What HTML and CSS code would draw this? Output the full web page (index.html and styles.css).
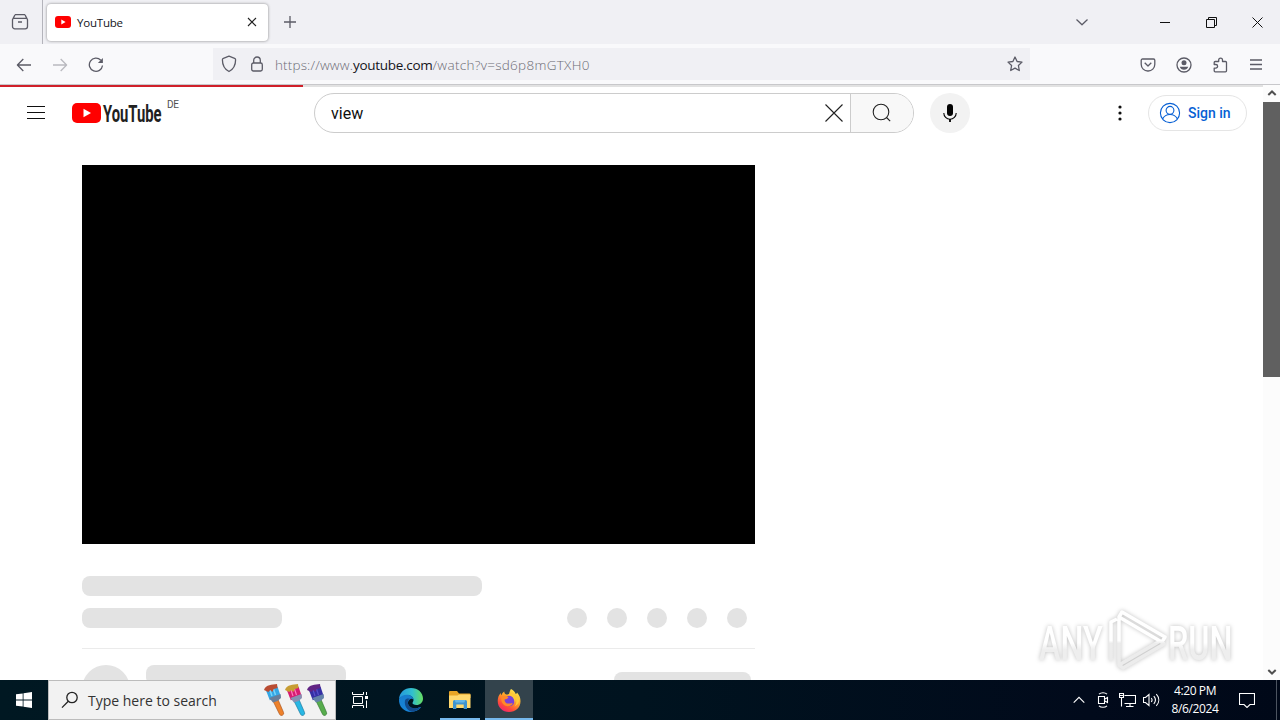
FILE: index.html
```html
<!DOCTYPE html>
<html lang="en">
  <head>
    <meta charset="UTF-8" />
    <meta name="viewport" content="width=device-width, initial-scale=1.0" />
    <title>YouTube</title>
    <link rel="stylesheet" href="styles.css">
  </head>
  <body>
    <!-- tabs -->
    <div class="tabbar">
      <div class="firefox-view">
        <svg width="18" height="18" viewBox="0 0 18 18" class="line-icon"><path d="M4 1.7h10M2.8 5.4h12.4a1.3 1.3 0 0 1 1.3 1.3v6.8a2.3 2.3 0 0 1-2.3 2.3H3.8a2.3 2.3 0 0 1-2.3-2.3V6.7a1.3 1.3 0 0 1 1.3-1.3zM7 9h4M4 1.7 2.2 5.4M14 1.7l1.8 3.7"/></svg>
      </div>
      <div class="tab">
        <svg width="16" height="12" viewBox="0 0 16 12"><rect width="16" height="12" rx="3" fill="#f00"/><path d="M6.3 3.5v5l4.3-2.5z" fill="#fff"/></svg>
        <span class="tab-title">YouTube</span>
        <svg width="10" height="10" viewBox="0 0 10 10" class="dark-icon"><path d="M1 1l8 8M9 1L1 9"/></svg>
      </div>
      <svg class="new-tab line-icon" width="12" height="12" viewBox="0 0 12 12"><path d="M6 0v12M0 6h12"/></svg>
      <svg class="all-tabs line-icon" width="14" height="8" viewBox="0 0 14 8"><path d="M1.5 1.5 7 6.7l5.5-5.2"/></svg>
      <div class="window-buttons">
        <span><svg width="11" height="11" viewBox="0 0 11 11" class="win-icon"><path d="M0 5.500h10"/></svg></span>
        <span><svg width="11" height="11" viewBox="0 0 11 11" class="win-icon"><path d="M.5 2.500h8v8h-8zM2.500 2.500v-2h8v8h-2"/></svg></span>
        <span><svg width="11" height="11" viewBox="0 0 11 11" class="win-icon"><path d="M.5.5l10 10M10.500.5l-10 10"/></svg></span>
      </div>
    </div>

    <!-- navigation toolbar -->
    <div class="toolbar">
      <span class="tool"><svg width="16" height="14" viewBox="0 0 16 14" class="line-icon"><path d="M15 7H1.5M7.3 1 1.4 7l5.900 6"/></svg></span>
      <span class="tool disabled"><svg width="16" height="14" viewBox="0 0 16 14" class="line-icon"><path d="M1 7h13.5M8.7 1l5.900 6-5.900 6"/></svg></span>
      <span class="tool"><svg width="16" height="16" viewBox="0 0 16 16" class="line-icon"><path d="M14.5 8.500a6.600 6.600 0 1 1-1.700-5.200"/><path d="M14.9 1v5h-5z" fill="#5b5b66" stroke="none"/></svg></span>
      <div class="urlbar">
        <svg width="16" height="18" viewBox="0 0 16 18" class="line-icon"><path d="M8 1.200l5.600 2.100a1.500 1.500 0 0 1 1 1.400c0 5-1.700 9.200-6.600 11.800C3.100 13.900 1.400 9.700 1.400 4.700a1.500 1.500 0 0 1 1-1.400z"/></svg>
        <svg width="14" height="16" viewBox="0 0 14 16" class="line-icon lock"><rect x="1.700" y="7" width="10.600" height="8" rx="1.700"/><path d="M3.700 7V4.300a3.300 3.300 0 0 1 6.600 0V7"/></svg>
        <span class="url"><span class="url-scheme">https://www.</span><span class="url-host">youtube.com</span><span class="url-path">/watch?v=sd6p8mGTXH0</span></span>
        <svg width="16" height="16" viewBox="0 0 16 16" class="line-icon"><path d="M8 1l2.100 4.500 4.900.6-3.600 3.400.9 5L8 12.100l-4.300 2.400.9-5L1 6.100l4.900-.6z"/></svg>
      </div>
      <div class="toolbar-right">
        <span class="tool"><svg width="16" height="14" viewBox="0 0 16 14" class="line-icon"><path d="M2.500 1h11a1.300 1.300 0 0 1 1.300 1.300v4A6.600 6.600 0 0 1 8 13a6.600 6.600 0 0 1-6.800-6.700v-4A1.300 1.300 0 0 1 2.500 1zM4.700 4.700 8 8l3.300-3.300"/></svg></span>
        <span class="tool"><svg width="16" height="16" viewBox="0 0 16 16" class="line-icon"><circle cx="8" cy="8" r="7"/><circle cx="8" cy="5.800" r="2.500" fill="#5b5b66" stroke="none"/><path d="M3.800 9.800h8.400c-.5 1.800-2.200 3-4.200 3s-3.700-1.200-4.200-3z" fill="#5b5b66" stroke="none"/></svg></span>
        <span class="tool"><svg width="16" height="16" viewBox="0 0 16 16" class="line-icon"><path d="M3.200 14.800h10.300a1 1 0 0 0 1-1V5.500a1 1 0 0 0-1-1h-3V3a1.900 1.900 0 0 0-3.800 0v1.500H3.200a1 1 0 0 0-1 1v2h1.600a1.800 1.800 0 0 1 0 3.600H2.200v2.700a1 1 0 0 0 1 1z"/></svg></span>
        <span class="tool"><svg width="12" height="12" viewBox="0 0 12 12" class="line-icon"><path d="M0 1h12M0 5.500h12M0 10h12"/></svg></span>
      </div>
    </div>

    <div class="viewport">
      <div class="page">
        <div class="progress"><div class="progress-value"></div></div>
        <header class="masthead">
          <svg class="guide" width="18" height="14" viewBox="0 0 18 14"><path d="M0 .5h18M0 6.500h18M0 12.500h18" stroke="#0f0f0f"/></svg>
          <svg class="logo" width="92" height="28" viewBox="0 -2 92 28">
            <rect y="2" width="29" height="20" rx="5" fill="#f00"/>
            <path d="M11.500 7.700v8.600l7.500-4.300z" fill="#fff"/>
            <text x="0" y="0" transform="translate(31 20.500) scale(.63 1)" class="logo-text">YouTube</text>
          </svg>
          <span class="country">DE</span>
          <div class="searchbox">
            <span class="query">view</span>
            <svg width="18" height="18" viewBox="0 0 18 18" class="dark-icon"><path d="M.5.5l17 17M17.500.5l-17 17"/></svg>
            <div class="search-button">
              <svg width="20" height="20" viewBox="0 0 20 20" class="dark-icon"><circle cx="9" cy="9" r="7.800"/><path d="M14.500 14.500l3.700 3.700"/></svg>
            </div>
          </div>
          <div class="mic">
            <svg width="16" height="20" viewBox="0 0 16 20"><rect x="5" y="1" width="6" height="12" rx="3" fill="#030303"/><path d="M1.800 10a6.200 6.200 0 0 0 12.400 0" fill="none" stroke="#030303" stroke-width="1.100"/><path d="M8 16V19" stroke="#030303" stroke-width="1.800"/></svg>
          </div>
          <div class="masthead-end">
            <svg width="4" height="16" viewBox="0 0 4 16" fill="#0f0f0f"><circle cx="2" cy="2" r="1.600"/><circle cx="2" cy="8" r="1.600"/><circle cx="2" cy="14" r="1.600"/></svg>
            <div class="signin">
              <svg width="22" height="22" viewBox="0 0 22 22" fill="none" stroke="#065fd4" stroke-width="1.100"><circle cx="11" cy="11" r="9.600"/><circle cx="11" cy="8.300" r="3.900"/><path d="M3.600 17c1.500-3 4.200-4.500 7.400-4.500s5.900 1.500 7.400 4.500"/></svg>
              <span>Sign in</span>
            </div>
          </div>
        </header>

        <main class="watch">
          <div class="player"></div>
          <div class="skeleton title-line"></div>
          <div class="info-row">
            <div class="skeleton views-line"></div>
            <div class="actions">
              <span class="dot"></span>
              <span class="dot"></span>
              <span class="dot"></span>
              <span class="dot"></span>
              <span class="dot"></span>
            </div>
          </div>
          <div class="owner-row">
            <span class="avatar"></span>
            <div class="skeleton owner-name"></div>
            <div class="skeleton subscribe"></div>
          </div>
        </main>
      </div>

      <div class="scrollbar">
        <svg width="10" height="6" viewBox="0 0 10 6"><path d="M1.300 5 5 1.500 8.700 5"/></svg>
        <div class="thumb"></div>
        <svg width="10" height="6" viewBox="0 0 10 6"><path d="M1.300 1 5 4.500 8.700 1"/></svg>
      </div>

      <svg class="watermark" width="204" height="72" viewBox="0 -2 204 72">
        <defs>
          <linearGradient id="markFade" x1="0" x2="0" y1="0" y2="1"><stop offset=".5" stop-color="#fff"/><stop offset=".62" stop-color="#eee"/></linearGradient>
          <linearGradient id="playFade" gradientUnits="userSpaceOnUse" x1="0" x2="0" y1="5" y2="62"><stop offset=".5" stop-color="#fff"/><stop offset=".55" stop-color="#ececec"/></linearGradient>
        </defs>
        <text x="0" y="0" transform="translate(5 53) scale(.66 1)">ANY</text>
        <path d="M85 10v48l41-24zM77 54V15l6-3M85 10l3-5 43 25-3 5M126 34l4 3-41 24-4-3"/>
        <text x="0" y="0" transform="translate(134 53) scale(.66 1)">RUN</text>
      </svg>
    </div>

    <!-- windows taskbar -->
    <footer class="taskbar">
      <div class="start">
        <svg width="16" height="16" viewBox="0 0 16 16" fill="#fff"><path d="M0 2.300 6.700 1.400v6.200H0zM7.500 1.300 16 0v7.600H7.500zM0 8.400h6.700v6.200L0 13.700zM7.500 8.400H16V16l-8.500-1.300z"/></svg>
      </div>
      <div class="task-search">
        <svg width="18" height="18" viewBox="0 0 18 18" class="dark-icon search-glass"><circle cx="11" cy="6.500" r="5.200"/><path d="M7.300 10.300 1 16.600"/></svg>
        <span class="task-placeholder">Type here to search</span>
        <svg class="brushes" width="66" height="34" viewBox="0 0 66 34">
          <g>
            <path d="M10 18l5-1.500 5.500 12.800a2 2 0 0 1-4 1.900z" fill="#ed812b" stroke="#a34d19" stroke-width=".6"/>
            <path d="M3 7.500 14.500 3.500l3.300 10-11 3.800z" fill="#35a7e5"/>
            <path d="M7 7l2 6M10.500 6l2 6" stroke="#78d5fa" stroke-width="1.500"/>
            <path d="M1 7C3 1 9 2 14 1l.5 4-3.800 1-1.400 3-2-2-2 2z" fill="#b94c32"/>
            <path d="M6.300 15 17.500 11l.5 4-3.500 3-4.500 1.500z" fill="#687d99"/>
          </g>
          <g transform="translate(21)">
            <path d="M10 18l5-1.500 5.500 12.800a2 2 0 0 1-4 1.900z" fill="#28b7e4" stroke="#167196" stroke-width=".6"/>
            <path d="M3 7.500 14.500 3.500l3.300 10-11 3.800z" fill="#d71b72"/>
            <path d="M7 7l2 6M10.500 6l2 6" stroke="#ff7bbc" stroke-width="1.200"/>
            <path d="M1 7C3 1 9 2 14 1l.5 4-3.800 1-1.400 3-2-2-2 2z" fill="#c79d33"/>
            <path d="M6.300 15 17.500 11l.5 4-3.500 3-4.500 1.500z" fill="#8790b3"/>
          </g>
          <g transform="translate(43)">
            <path d="M10 18l5-1.500 5.500 12.800a2 2 0 0 1-4 1.900z" fill="#58ad4d" stroke="#2d702b" stroke-width=".6"/>
            <path d="M3 7.500 14.500 3.500l3.300 10-11 3.800z" fill="#3530a5"/>
            <path d="M7 7l2 6M10.500 6l2 6" stroke="#5751ca" stroke-width="1.200"/>
            <path d="M1 7C3 1 9 2 14 1l.5 4-3.800 1-1.400 3-2-2-2 2z" fill="#612484"/>
            <path d="M6.300 15 17.500 11l.5 4-3.500 3-4.500 1.500z" fill="#6483a9"/>
          </g>
        </svg>
      </div>
      <div class="task-view">
        <svg width="17" height="16" viewBox="0 0 17 16" fill="none" stroke="#fff"><path d="M1.500 4.500h9v7h-9zM.5 0v2.500h11V0M.5 16v-2.500h11V16M14.500 0v3M14.500 8.500V16"/><path d="M13 4h3v3h-3z" fill="#fff" stroke="none"/></svg>
      </div>
      <div class="task-app edge">
        <svg width="26" height="26" viewBox="0 0 26 26">
          <defs>
            <linearGradient id="edgeTop" x1="0" x2="1"><stop offset="0" stop-color="#2497dc"/><stop offset=".55" stop-color="#31bfd0"/><stop offset="1" stop-color="#66df61"/></linearGradient>
            <linearGradient id="edgeLow" x1="0" x2="0" y1="0" y2="1"><stop offset="0" stop-color="#187dcd"/><stop offset="1" stop-color="#1684d8"/></linearGradient>
          </defs>
          <path d="M1 12C1.500 5.500 6.500 1 13 1c7 0 12 4.700 12 10.500 0 4-3 6.500-6.500 6.500-2.800 0-4-1.200-4-2 0-.8 1-1.200 1-3 0-2.500-2-4.500-5-4.500C6 8.500 2.500 10 1 12z" fill="url(#edgeTop)"/>
          <path d="M1 12c1.500-3 4.500-4.300 8-4.300 3.800 0 6.500 2.300 6.500 5.300-.5-1-1.500-1.500-2.500-1.300-2 .5-3.500 2.800-3 5.300.7 3.500 4.500 5.300 8.500 4.300 1.800-.4 3-1 3.800-1.300.5-.2.800.2.500.6C20.500 23.500 17 25 13 25 6 25 .5 19.500 1 12z" fill="url(#edgeLow)"/>
          <path d="M7 13.500c-1 5 2 10 7 11.300 3.500-.3 6.800-2 8.800-4.200.3-.4 0-.8-.5-.6-1.300.8-3 1.300-5 1.300-4.300 0-7.300-2.600-7.500-6 0-1.500.8-3 2-3.500-2-.5-4.200 0-4.800 1.700z" fill="#114a8b"/>
        </svg>
      </div>
      <div class="task-app open">
        <svg width="22" height="20" viewBox="0 0 22 20">
          <path d="M0 2a1 1 0 0 1 1-1h7l2 2.500h10.500a1 1 0 0 1 1 1V8H0z" fill="#e8a526"/>
          <path d="M0 5.500h8.500l1.500-1h11.500V18H0z" fill="#ffd86e"/>
          <path d="M4 19v-7.500A1.500 1.500 0 0 1 5.500 10h11a1.500 1.500 0 0 1 1.500 1.500V19h-3.300v-4.500H7.300V19z" fill="#3e93cf"/>
          <path d="M5.500 10h11l-1.300 2.500H6.800z" fill="#64b6e8"/>
        </svg>
      </div>
      <div class="task-app open active">
        <svg width="24" height="25" viewBox="0 0 24 25">
          <defs>
            <linearGradient id="foxFire" x1=".8" y1="0" x2=".2" y2="1"><stop offset="0" stop-color="#fff150"/><stop offset=".45" stop-color="#ff9b27"/><stop offset=".75" stop-color="#ff4a3b"/><stop offset="1" stop-color="#ed1e79"/></linearGradient>
          </defs>
          <path d="M14 1c2.500 1.200 4 3 4.700 5 1-.3 1.300-1 1.300-1.500 2.300 2.500 3.500 5.500 3.500 8.700C23.500 19.700 18.500 24 12 24S.7 19.300.7 13c0-3.300 1-6 3-8 0 1 .3 1.800.8 2.300C5 5.500 6 4.300 7.200 3.500c.1 1.500.8 2.500 2 3 1.700.1 2.600-.2 3-1C12.600 4 13 2.300 14 1z" fill="url(#foxFire)"/>
          <circle cx="12.300" cy="13" r="5.300" fill="#7841d8"/>
          <path d="M4.500 9c2-1.800 4.700-1.800 7 .3-1 1.700-2.400 2-4 2.100 0 2.700 1.800 4.300 4 4.200 1.800 0 3-.6 4.300-.1-1.500 2.700-5 3.500-8 1.900C5 15.700 3.700 12.500 4.500 9z" fill="#ff8a28"/>
          <path d="M11 7c2 0 3.500.7 4.500 2 1.500 2 2.300 3.700 2 6 1-1.300 1.300-3.300 1-5 1.500 3 1 6.500-1 8.500 3.500-1.500 5-4.500 4.800-8C21 9 19 6 14 5z" fill="#ffca36"/>
        </svg>
      </div>
      <div class="tray">
        <span class="tray-item"><svg width="12" height="8" viewBox="0 0 12 8"><path d="M.7 6.700 6 1.400l5.300 5.300"/></svg></span>
        <span class="tray-item"><svg width="12" height="16" viewBox="0 0 12 16"><path d="M1.500 4.500h6v7h-6zM7.500 7.200l3-1.700v5l-3-1.700M2 2.200C4 .2 8 .2 10 2.200M2 13.800c2 2 6 2 8 0"/></svg></span>
        <span class="tray-item"><svg width="17" height="15" viewBox="0 0 17 15"><path d="M5.500 2.500h11v8h-11M11 10.500v3M7 13.500h7.500M.5.500h4v4h-4zM2.500 4.500v9M1 2.500h3"/></svg></span>
        <span class="tray-item"><svg width="17" height="14" viewBox="0 0 17 14"><path d="M.5 4.500h2L6 1.500v11l-3.500-3h-2zM8.300 5c.9 1.200.9 2.800 0 4M10.800 3.200c2 2.300 2 5.300 0 7.600M13.300 1.200c3.300 3.500 3.300 8.100 0 11.600"/></svg></span>
        <div class="clock"><span>4:20 PM</span><span>8/6/2024</span></div>
        <svg class="notifications" width="16" height="16" viewBox="0 0 16 16"><path d="M.5 1.500h15v11h-4.500l-3 3-3-3H.5z"/></svg>
        <span class="show-desktop"></span>
      </div>
    </footer>
  </body>
</html>
```

FILE: styles.css
```css
* {
  box-sizing: border-box;
}

body {
  margin: 0;
  width: 1280px;
  height: 720px;
  overflow: hidden;
  display: flex;
  flex-direction: column;
  font-family: "Open Sans", "Noto Sans", sans-serif;
  background-color: #fff;
}

svg {
  display: block;
  flex-shrink: 0;
}

.line-icon {
  fill: none;
  stroke: #5b5b66;
  stroke-width: 1.3;
  stroke-linejoin: round;
}

.dark-icon {
  fill: none;
  stroke: #222;
  stroke-width: 1.1;
}

.win-icon {
  fill: none;
  stroke: #111;
}

/* tabs */
.tabbar {
  height: 44px;
  display: flex;
  align-items: center;
  background-color: #f0f0f4;
}

.firefox-view {
  width: 43px;
  height: 44px;
  padding-left: 11px;
  display: flex;
  align-items: center;
  border-right: 1px solid #b4b4bb;
}

.tab {
  width: 221px;
  height: 37px;
  margin-left: 4px;
  padding: 0 11px 0 8px;
  display: flex;
  align-items: center;
  background-color: #fff;
  border-radius: 4px;
  box-shadow: 0 0 3px rgba(0, 0, 0, 0.45);
}

.tab-title {
  flex: 1;
  margin-left: 6px;
  font-size: 11.5px;
  letter-spacing: -0.2px;
  color: #15141a;
}

.new-tab {
  margin-left: 16px;
}

.all-tabs {
  margin-left: auto;
  margin-right: 53px;
}

.window-buttons {
  display: flex;
}

.window-buttons span {
  width: 46px;
  display: flex;
  justify-content: center;
}

/* toolbar */
.toolbar {
  height: 41px;
  padding: 0 6px;
  display: flex;
  align-items: center;
  background-color: #f9f9fb;
  border-bottom: 1px solid #c8c8cb;
}

.tool {
  width: 36px;
  padding-top: 1px;
  display: flex;
  justify-content: center;
}

.disabled {
  opacity: 0.4;
}

.urlbar {
  width: 817px;
  height: 32px;
  margin-left: 99px;
  padding: 0 7px 0 8px;
  display: flex;
  align-items: center;
  background-color: #f0f0f4;
}

.lock {
  margin-left: 13px;
}

.url {
  flex: 1;
  display: flex;
  margin-left: 11px;
  padding-top: 1px;
  font-size: 13.5px;
  font-weight: 300;
  color: #6c6c74;
  white-space: nowrap;
}

.url-scheme {
  letter-spacing: 0.15px;
}

.url-host {
  color: #15141a;
  font-weight: 400;
  letter-spacing: -0.3px;
}

.url-path {
  letter-spacing: 0.3px;
}

.toolbar-right {
  margin-left: auto;
  display: flex;
  align-items: center;
}

/* page */
.viewport {
  position: relative;
  height: 595px;
  display: flex;
  overflow: hidden;
}

.page {
  width: 1263px;
}

.progress {
  height: 2px;
  background-color: #e2e2e2;
}

.progress-value {
  width: 303px;
  height: 2px;
  background-color: #d0202a;
}

.masthead {
  height: 52px;
  padding: 0 16px 0 27px;
  display: flex;
  align-items: center;
  font-family: Roboto, sans-serif;
}

.logo {
  margin-left: 27px;
}

.logo-text {
  font-family: Roboto, sans-serif;
  font-size: 23.5px;
  font-weight: 700;
  fill: #212121;
}

.country {
  width: 16px;
  margin: 0 0 18px 3px;
  font-size: 10px;
  letter-spacing: -0.3px;
  color: #505050;
}

.searchbox {
  width: 600px;
  height: 40px;
  margin-left: 131px;
  display: flex;
  align-items: center;
  overflow: hidden;
  border: 1px solid #ccc;
  border-radius: 20px;
}

.query {
  flex: 1;
  padding-left: 16px;
  font-size: 16px;
  color: #0f0f0f;
}

.search-button {
  width: 63px;
  height: 38px;
  margin-left: 7px;
  display: flex;
  align-items: center;
  justify-content: center;
  background-color: #f8f8f8;
  border-left: 1px solid #ccc;
}

.mic {
  width: 40px;
  height: 40px;
  margin-left: 16px;
  display: flex;
  align-items: center;
  justify-content: center;
  border-radius: 50%;
  background-color: #f2f2f2;
}

.masthead-end {
  margin-left: auto;
  display: flex;
  align-items: center;
  gap: 26px;
}

.signin {
  width: 99px;
  height: 36px;
  padding-left: 10px;
  display: flex;
  align-items: center;
  gap: 7px;
  border: 1px solid #e5e5e5;
  border-radius: 18px;
  font-size: 14px;
  font-weight: 500;
  color: #065fd4;
}

.watch {
  width: 673px;
  margin: 26px 0 0 82px;
}

.player {
  height: 379px;
  background-color: #000;
}

.skeleton {
  height: 20px;
  border-radius: 8px;
  background-color: #e3e3e3;
}

.title-line {
  width: 400px;
  margin-top: 32px;
}

.info-row {
  height: 41px;
  margin-top: 12px;
  display: flex;
  justify-content: space-between;
  border-bottom: 1px solid #ebebeb;
}

.views-line {
  width: 200px;
}

.actions {
  display: flex;
  gap: 20px;
  margin-right: 8px;
}

.dot {
  width: 20px;
  height: 20px;
  border-radius: 50%;
  background-color: #e3e3e3;
}

.owner-row {
  margin-top: 16px;
  display: flex;
}

.avatar {
  width: 48px;
  height: 48px;
  border-radius: 50%;
  background-color: #e3e3e3;
}

.owner-name {
  width: 200px;
  margin-left: 16px;
}

.subscribe {
  width: 137px;
  height: 36px;
  margin: 7px 4px 0 auto;
}

.scrollbar {
  width: 17px;
  display: flex;
  flex-direction: column;
  align-items: center;
  padding: 5px 0;
  background-color: #fcfcfc;
}

.scrollbar path {
  fill: none;
  stroke: #505050;
  stroke-width: 2;
}

.thumb {
  width: 17px;
  height: 275px;
  margin: 6px 0 auto;
  background-color: #606060;
}

.watermark {
  position: absolute;
  left: 1034px;
  top: 520px;
  overflow: visible;
  filter: drop-shadow(0 0 2px rgba(0, 0, 0, 0.25));
}

.watermark text {
  font-family: Roboto, sans-serif;
  font-size: 49px;
  font-weight: 500;
  fill: url(#markFade);
}

.watermark path {
  fill: none;
  stroke: url(#playFade);
  stroke-width: 3.5;
  stroke-linejoin: round;
}

/* taskbar */
.taskbar {
  height: 40px;
  display: flex;
  color: #fff;
  background: linear-gradient(90deg, #001822, #00131f 50%, #010a1b 85%, #000818);
}

.start,
.task-view {
  width: 48px;
  display: flex;
  align-items: center;
  justify-content: center;
}

.task-search {
  width: 288px;
  padding: 0 6px 0 12px;
  display: flex;
  align-items: center;
  background-color: #f2f2f2;
  border: 1px solid #bcbcbc;
}

.search-glass {
  stroke-width: 1.3;
}

.task-placeholder {
  flex: 1;
  margin-left: 9px;
  font-size: 14px;
  color: #333;
  white-space: nowrap;
}

.task-app {
  width: 48px;
  display: flex;
  align-items: center;
  justify-content: center;
}

.edge {
  margin: 0 1px 0 3px;
}

.open {
  box-shadow: inset 0 -2px #76b9ed;
}

.task-app.open:not(.active) {
  width: 40px;
  margin: 0 5px 0 4px;
}

.active {
  background-color: #33434c;
}

.tray {
  margin-left: auto;
  display: flex;
  align-items: center;
}

.tray path {
  fill: none;
  stroke: #fff;
  stroke-width: 1.1;
}

.tray-item {
  width: 24px;
  display: flex;
  justify-content: center;
}

.clock {
  width: 64px;
  display: flex;
  flex-direction: column;
  align-items: center;
  font-size: 12px;
  line-height: 18px;
  letter-spacing: -0.4px;
}

.notifications {
  margin: 0 21px 0 12px;
}

.show-desktop {
  width: 4px;
  height: 40px;
  border-left: 1px solid #4c5460;
}
```
